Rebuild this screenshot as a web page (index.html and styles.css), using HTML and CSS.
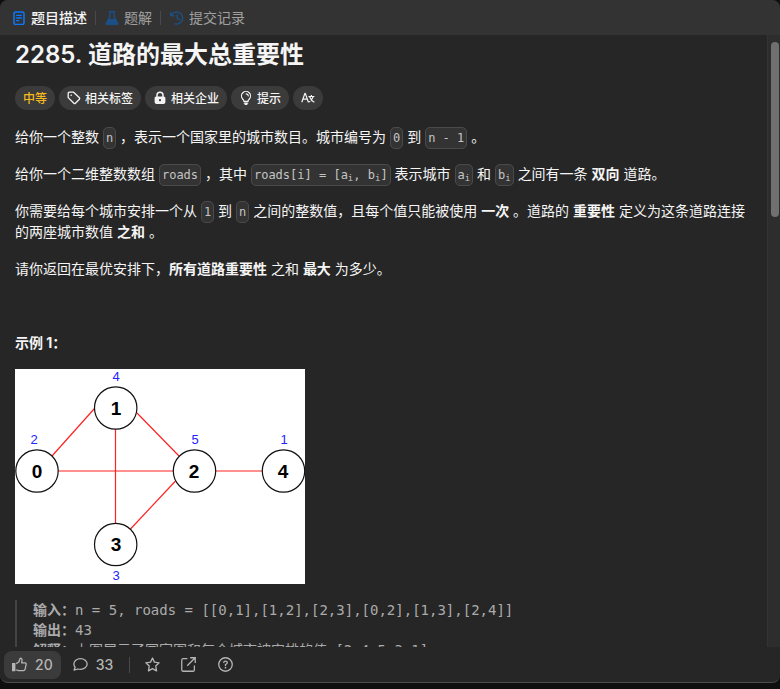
FILE: index.html
```html
<!DOCTYPE html>
<html lang="zh-CN">
<head>
<meta charset="utf-8">
<meta name="viewport" content="width=device-width, initial-scale=1">
<title>2285. 道路的最大总重要性</title>
<link rel="stylesheet" href="styles.css">
</head>
<body>
<div class="panel">
  <nav class="tabs">
    <button class="tab active" type="button">
      <svg class="icon" viewBox="0 0 14 14"><rect x="2" y="1" width="10" height="12.4" rx="1.6" fill="none" stroke="currentColor" stroke-width="1.5"/><path d="M4.2 4.3h5.6M4.2 7h5.6M4.2 9.7h3" stroke="currentColor" stroke-width="1.3"/></svg>
      题目描述
    </button>
    <span class="divider"></span>
    <button class="tab" type="button">
      <svg class="icon" viewBox="0 0 14 14"><path d="M3.6.8h6.800M5 1v4.8L1.300 12.1q-.5 1.2.8 1.2h9.800q1.3 0 .8-1.2L9 5.800V1" fill="none" stroke="currentColor" stroke-width="1.4"/><path d="M3.200 8h7.600l2.200 4.400-.7 1H1.700l-.7-1z" fill="currentColor"/></svg>
      题解
    </button>
    <span class="divider"></span>
    <button class="tab" type="button">
      <svg class="icon" viewBox="0 0 14 14" fill="none" stroke="currentColor" stroke-width="1.4" stroke-linecap="round" stroke-linejoin="round"><path d="M.7 1.5v3.2h3.2M1.2 4.5A6 6 0 1 1 5 12.8M7.2 3.8v3.4l2.5 1.5"/></svg>
      提交记录
    </button>
  </nav>

  <div class="scroll-area">
    <main class="content">
      <h1>2285. 道路的最大总重要性</h1>
      <div class="tags">
        <span class="tag medium">中等</span>
        <button class="tag" type="button">
          <svg class="icon" viewBox="0 0 14 14" fill="none" stroke="currentColor" stroke-width="1.3" stroke-linejoin="round"><path d="M1.2 2.4q0-1.2 1.2-1.2h4.2l5.8 5.6q.7.8 0 1.5l-4 4q-.7.7-1.5 0L1.2 6.6z"/><circle cx="4.2" cy="4.2" r=".8" fill="currentColor" stroke="none"/></svg>
          相关标签
        </button>
        <button class="tag" type="button">
          <svg class="icon" viewBox="0 0 14 14"><path d="M4 6V4.2a3 3 0 0 1 6 0V6" fill="none" stroke="currentColor" stroke-width="1.5"/><path fill-rule="evenodd" d="M3.2 5.4h7.6q1.6 0 1.6 1.6v4q0 2-2 2H3.600q-2 0-2-2V7q0-1.600 1.600-1.600zM7 8.100a1.100 1.100 0 1 0 0 2.200 1.100 1.100 0 0 0 0-2.200z" fill="currentColor"/></svg>
          相关企业
        </button>
        <button class="tag" type="button">
          <svg class="icon" viewBox="0 0 14 14" fill="none" stroke="currentColor" stroke-width="1.2" stroke-linecap="round"><path d="M5 10.400Q5 9.200 3.700 8A4.500 4.500 0 1 1 10.300 8Q9 9.200 9 10.400zM5.300 12.200h3.400M6.200 13.400h1.600M7.200 2.800q1.900.2 2.100 2"/></svg>
          提示
        </button>
        <button class="tag" type="button" aria-label="切换语言">
          <svg class="icon" viewBox="0 0 14 14" fill="none" stroke="currentColor" stroke-width="1.2" stroke-linejoin="round"><path d="M.8 11.300 3.900 2.400h.4l3.100 8.900M1.900 8.200h4.400M7.400 5.500h6M10.400 4.100v1.400M12.200 5.700q-1.200 4-4.600 5.600M8.600 5.700q1.400 4 4.800 5.600"/></svg>
        </button>
      </div>

      <p>给你一个整数 <code>n</code> ，表示一个国家里的城市数目。城市编号为 <code>0</code> 到 <code>n - 1</code> 。</p>
      <p>给你一个二维整数数组 <code>roads</code> ，其中 <code>roads[i] = [a<sub>i</sub>, b<sub>i</sub>]</code> 表示城市 <code>a<sub>i</sub></code> 和 <code>b<sub>i</sub></code> 之间有一条 <strong>双向</strong> 道路。</p>
      <p>你需要给每个城市安排一个从 <code>1</code> 到 <code>n</code> 之间的整数值，且每个值只能被使用 <strong>一次</strong> 。道路的 <strong>重要性</strong> 定义为这条道路连接的两座城市数值 <strong>之和</strong> 。</p>
      <p>请你返回在最优安排下，<strong>所有道路重要性</strong> 之和 <strong>最大</strong> 为多少。</p>
      <p>&nbsp;</p>
      <p><strong>示例 1：</strong></p>

      <svg class="graph" viewBox="0 0 290 215" role="img" aria-label="道路图">
        <rect width="290" height="215" fill="#fff"/>
        <g stroke="#f22" stroke-width="1.200">
          <path d="M37 87 79.500 39.500M122 44l42 43M43 102h116M100.500 60v95M115.500 160l45-48M200 102h50"/>
        </g>
        <g fill="#fff" stroke="#111" stroke-width="1.200">
          <circle cx="22" cy="102" r="21.200"/>
          <circle cx="100.700" cy="39" r="21.200"/>
          <circle cx="179.500" cy="102" r="21.200"/>
          <circle cx="100.700" cy="175.500" r="21.200"/>
          <circle cx="268.500" cy="102" r="21.200"/>
        </g>
        <g class="node">
          <text x="22" y="109">0</text>
          <text x="101" y="46">1</text>
          <text x="179" y="109">2</text>
          <text x="101" y="182">3</text>
          <text x="268" y="109">4</text>
        </g>
        <g class="value">
          <text x="19" y="75">2</text>
          <text x="101" y="12">4</text>
          <text x="180" y="75">5</text>
          <text x="101" y="211">3</text>
          <text x="269" y="75">1</text>
        </g>
      </svg>

<pre><strong>输入：</strong>n = 5, roads = [[0,1],[1,2],[2,3],[0,2],[1,3],[2,4]]
<strong>输出：</strong>43
<strong>解释：</strong>上图展示了国家图和每个城市被安排的值 [2,4,5,3,1] 。</pre>
    </main>
    <div class="track"><div class="thumb"></div></div>
  </div>

  <footer class="actions">
    <button class="action liked" type="button">
      <svg class="icon" viewBox="0 0 14 14"><path d="M0 5.600h3.200v7.600H0z" fill="currentColor"/><path d="M4 6.200 6.500 4.500 7.600 1.200q1.800-.2 1.800 1.600L9 5.400h3.200q1.300.2 1 1.500l-1 4.600q-.3 1.200-1.500 1.200H6.200L4 12" fill="none" stroke="currentColor" stroke-width="1.200" stroke-linejoin="round"/></svg>
      20
    </button>
    <button class="action" type="button">
      <svg class="icon" viewBox="0 0 14 14"><path d="M1 12.200 2 9.600A5.200 5.200 0 0 1 .8 6.500C.8 3.700 3.600 1.500 7 1.500s6.200 2.200 6.200 5-2.800 5.100-6.200 5.100q-1.300 0-2.500-.4z" fill="none" stroke="currentColor" stroke-width="1.200" stroke-linejoin="round"/></svg>
      33
    </button>
    <span class="divider"></span>
    <button class="action icon-only" type="button" aria-label="收藏">
      <svg class="icon" viewBox="0 0 14 14"><path d="m7 .9 1.800 3.900 4.400.6-3.200 3 .8 4.500L7 10.800l-3.800 2.100.8-4.500-3.200-3 4.400-.6z" fill="none" stroke="currentColor" stroke-width="1.200" stroke-linejoin="round"/></svg>
    </button>
    <button class="action icon-only" type="button" aria-label="分享">
      <svg class="icon" viewBox="0 0 14 14"><path d="M6 1.500H2.200Q.7 1.500.7 3v8.800q0 1.500 1.500 1.500H11q1.500 0 1.500-1.500V8M8.500.7h4.800v4.800M13 1 5.800 8.200" fill="none" stroke="currentColor" stroke-width="1.200"/></svg>
    </button>
    <button class="action icon-only" type="button" aria-label="帮助">
      <svg class="icon" viewBox="0 0 14 14"><circle cx="7" cy="7" r="6.300" fill="none" stroke="currentColor" stroke-width="1.200"/><path d="M5.300 5.600q0-1.700 1.700-1.700t1.700 1.500Q8.700 6.400 7 7v1.300" fill="none" stroke="currentColor" stroke-width="1.200"/><circle cx="7" cy="10" r=".8" fill="currentColor"/></svg>
    </button>
  </footer>
</div>
</body>
</html>
```
FILE: styles.css
```css
* {
  box-sizing: border-box;
}

body {
  margin: 0;
  height: 100vh;
  padding-bottom: 6px;
  background: #0f0f0f;
  color: #f5f5f5;
  font: 14px/21px Inter, "Noto Sans CJK SC", sans-serif;
}

button {
  border: 0;
  padding: 0;
  background: none;
  color: inherit;
  font: inherit;
}

.icon {
  width: 14px;
  height: 14px;
  flex: none;
}

.panel {
  display: flex;
  flex-direction: column;
  height: 100%;
  overflow: hidden;
  background: #262626;
  border-bottom: 1px solid #4c4c4c;
  border-radius: 8px;
}

.tabs {
  display: flex;
  flex: none;
  align-items: center;
  gap: 8px;
  height: 35px;
  padding: 0 12px;
  background: #333;
}

.tab {
  display: flex;
  align-items: center;
  gap: 5px;
  color: #a0a0a0;
}

.tab .icon {
  color: #1c4f86;
}

.tab.active {
  color: #f5f5f5;
  font-weight: 500;
}

.tab.active .icon {
  color: #0a7aff;
}

.divider {
  width: 1px;
  height: 14px;
  background: #4a4a4a;
}

.tabs .divider {
  margin-right: 1px;
}

.scroll-area {
  display: flex;
  flex: 1;
  min-height: 0;
}

.content {
  flex: 1;
  min-width: 0;
  overflow: hidden;
  padding: 4px 16px 0 15px;
}

h1 {
  margin: 0;
  font-size: 24px;
  font-weight: 600;
  line-height: 32px;
}

.tags {
  display: flex;
  gap: 4px;
  margin: 15px 0 16px;
}

.tag {
  display: flex;
  align-items: center;
  gap: 4px;
  height: 24px;
  padding: 0 8px;
  border-radius: 12px;
  background: #3b3b3b;
  font-size: 12px;
  font-weight: 500;
}

.medium {
  color: #f5b820;
}

p {
  margin: 0 0 16px;
}

strong {
  font-weight: 700;
}

code,
pre {
  font-family: "DejaVu Sans Mono", "Noto Sans CJK SC", monospace;
}

code {
  padding: 3px 2px;
  border: 1px solid #4a4a4a;
  border-radius: 5px;
  background: #333;
  color: #c4c4c4;
  font-size: 12px;
  line-height: 1;
}

sub {
  font-size: 9px;
  line-height: 0;
  vertical-align: -2px;
}

.graph {
  display: block;
  width: 290px;
  height: 215px;
}

.graph text {
  font-family: "Liberation Sans", sans-serif;
  text-anchor: middle;
}

.node {
  fill: #000;
  font-size: 19px;
  font-weight: 700;
}

.value {
  fill: #22f;
  font-size: 13px;
}

pre {
  margin: 16px 0;
  padding-left: 16px;
  border-left: 2px solid #444;
  color: #ababab;
  font-size: 14px;
  line-height: 20px;
}

.track {
  width: 13px;
  padding: 7px 1px 0 3px;
  border-left: 1px solid #333;
  background: #2d2d2d;
}

.thumb {
  height: 29%;
  border-radius: 4px;
  background: #707070;
}

.actions {
  display: flex;
  flex: none;
  align-items: center;
  height: 35px;
  padding: 0 4px;
  color: #b5b5b5;
}

.action {
  display: flex;
  align-items: center;
  gap: 8px;
  height: 28px;
  padding: 0 8px;
  border-radius: 8px;
  font-weight: 500;
}

.action .icon {
  width: 15px;
  height: 15px;
}

.liked {
  background: #3b3b3b;
}

.action + .action:not(.icon-only) {
  margin-left: 4px;
}

.actions .divider {
  height: 16px;
  margin: 0 8px;
}

.icon-only {
  padding: 0 11px;
}

.divider + .icon-only {
  padding: 0 10px 0 7px;
}
```
